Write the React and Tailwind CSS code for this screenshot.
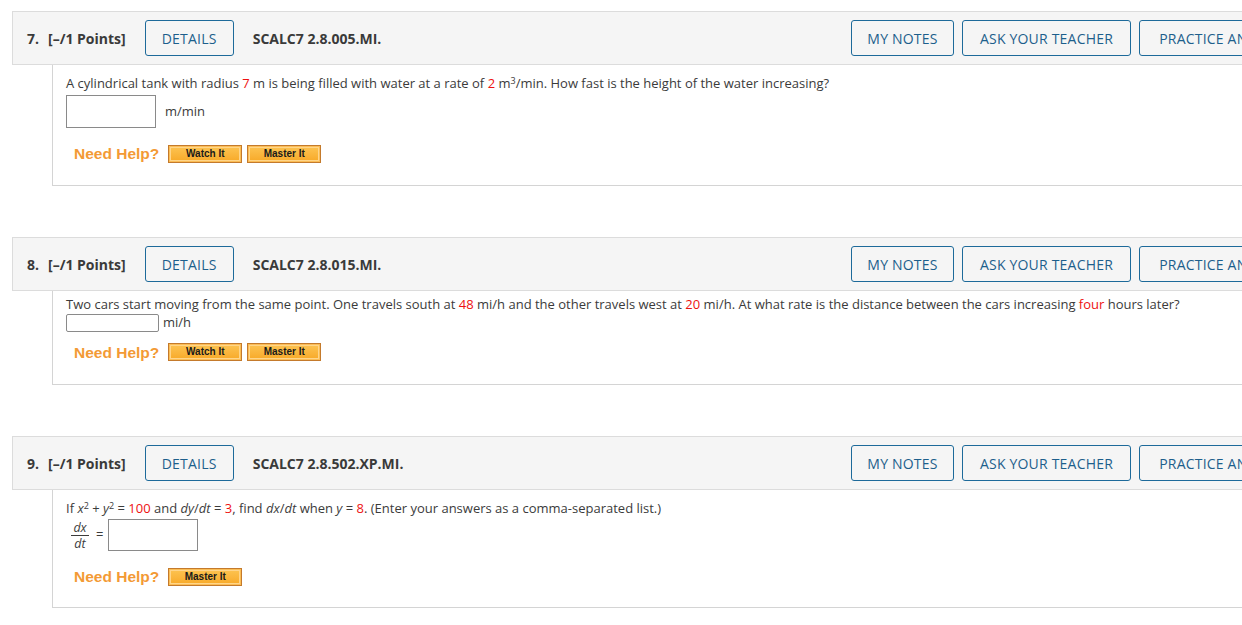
import React from "react";

const font = { fontFamily: '"Open Sans", "Liberation Sans", sans-serif' };

function OutlineBtn({ children, w }) {
  return (
    <div
      className={`h-[36px] ${w} shrink-0 flex items-center justify-center border border-[#1d6a9a] rounded-[3px] text-[14px] text-[#1d5f8c] tracking-[0.2px] whitespace-nowrap overflow-hidden`}
    >
      {children}
    </div>
  );
}

function Header({ num, code }) {
  return (
    <div className="ml-[12px] w-[1313px] h-[54px] bg-[#f5f5f5] border border-[#dcdcdc] flex items-center pl-[14px] pr-[10px]">
      <span className="text-[14px] font-bold text-[#3a3a3a] w-[21px]">{num}.</span>
      <span className="text-[14px] font-bold text-[#3a3a3a]">[–/1 Points]</span>
      <div className="ml-[19px]">
        <OutlineBtn w="w-[89px]">DETAILS</OutlineBtn>
      </div>
      <span className="ml-[19px] text-[14px] font-bold text-[#3a3a3a]">{code}</span>
      <div className="ml-auto flex gap-[8px]">
        <OutlineBtn w="w-[103px]">MY NOTES</OutlineBtn>
        <OutlineBtn w="w-[169px]">ASK YOUR TEACHER</OutlineBtn>
        <OutlineBtn w="w-[175px]">PRACTICE ANOTHER</OutlineBtn>
      </div>
    </div>
  );
}

function HelpBtn({ children }) {
  return (
    <div className="h-[18px] w-[74px] border border-[#c47a2c] p-[1px] bg-[#fbbd55]">
      <div className="h-full w-full border border-[#ffd58a] bg-gradient-to-b from-[#fcc14d] to-[#f8ac2c] flex items-center justify-center">
        <span
          className="text-[10px] font-bold text-[#1a1a1a] leading-none"
          style={{ fontFamily: '"Liberation Sans", Arial, sans-serif' }}
        >
          {children}
        </span>
      </div>
    </div>
  );
}

function NeedHelp({ watch = true }) {
  return (
    <div className="flex items-center ml-[8px]">
      <span
        className="text-[15.5px] font-bold text-[#f39a35] mr-[9px]"
        style={{ fontFamily: '"Liberation Sans", Arial, sans-serif' }}
      >
        Need Help?
      </span>
      <div className="flex gap-[5px]">
        {watch && <HelpBtn>Watch It</HelpBtn>}
        <HelpBtn>Master It</HelpBtn>
      </div>
    </div>
  );
}

const R = ({ children }) => <span className="text-[#ee1111]">{children}</span>;

export default function App() {
  return (
    <div className="w-[1242px] h-[625px] overflow-hidden bg-white" style={font}>
      <div className="pt-[11px]">
        {/* Q7 */}
        <Header num="7" code="SCALC7 2.8.005.MI." />
        <div className="ml-[52px] w-[1300px] h-[121px] border-l border-b border-[#d4d4d4] pl-[13px] pt-[9px] text-[13px] text-[#3b3b3b]">
          <div className="leading-[18px]">
            A cylindrical tank with radius <R>7</R> m is being filled with water at a rate of <R>2</R> m
            <sup className="text-[9px]">3</sup>/min. How fast is the height of the water increasing?
          </div>
          <div className="flex items-center mt-[3px]">
            <div className="w-[90px] h-[33px] border border-[#8a8a8a]" />
            <span className="ml-[9px]">m/min</span>
          </div>
          <div className="mt-[14px]">
            <NeedHelp />
          </div>
        </div>

        <div className="h-[51px]" />

        {/* Q8 */}
        <Header num="8" code="SCALC7 2.8.015.MI." />
        <div className="ml-[52px] w-[1300px] h-[94px] border-l border-b border-[#d4d4d4] pl-[13px] pt-[5px] text-[13px] text-[#3b3b3b]">
          <div className="leading-[17px]">
            Two cars start moving from the same point. One travels south at <R>48</R> mi/h and the other travels west at{" "}
            <R>20</R> mi/h. At what rate is the distance between the cars increasing <R>four</R> hours later?
          </div>
          <div className="flex items-center">
            <div className="w-[93px] h-[18px] border border-[#8a8a8a] rounded-[2px]" />
            <span className="ml-[4px]">mi/h</span>
          </div>
          <div className="mt-[8px]">
            <NeedHelp />
          </div>
        </div>

        <div className="h-[51px]" />

        {/* Q9 */}
        <Header num="9" code="SCALC7 2.8.502.XP.MI." />
        <div className="ml-[52px] w-[1300px] h-[118px] border-l border-b border-[#d4d4d4] pl-[13px] pt-[9px] text-[13px] text-[#3b3b3b]">
          <div className="leading-[18px]">
            If <i>x</i>
            <sup className="text-[9px]">2</sup> + <i>y</i>
            <sup className="text-[9px]">2</sup> = <R>100</R> and <i>dy</i>/<i>dt</i> = <R>3</R>, find <i>dx</i>/
            <i>dt</i> when <i>y</i> = <R>8</R>. (Enter your answers as a comma-separated list.)
          </div>
          <div className="flex items-center mt-[2px]">
            <div className="flex flex-col items-center ml-[4px] w-[20px]">
              <span className="italic leading-[15px] text-[12.5px]">dx</span>
              <div className="w-[18px] border-t border-[#3b3b3b]" />
              <span className="italic leading-[15px] text-[12.5px]">dt</span>
            </div>
            <span className="ml-[6px]">=</span>
            <div className="ml-[5px] w-[90px] h-[32px] border border-[#8a8a8a]" />
          </div>
          <div className="mt-[14px]">
            <NeedHelp watch={false} />
          </div>
        </div>
      </div>
    </div>
  );
}
